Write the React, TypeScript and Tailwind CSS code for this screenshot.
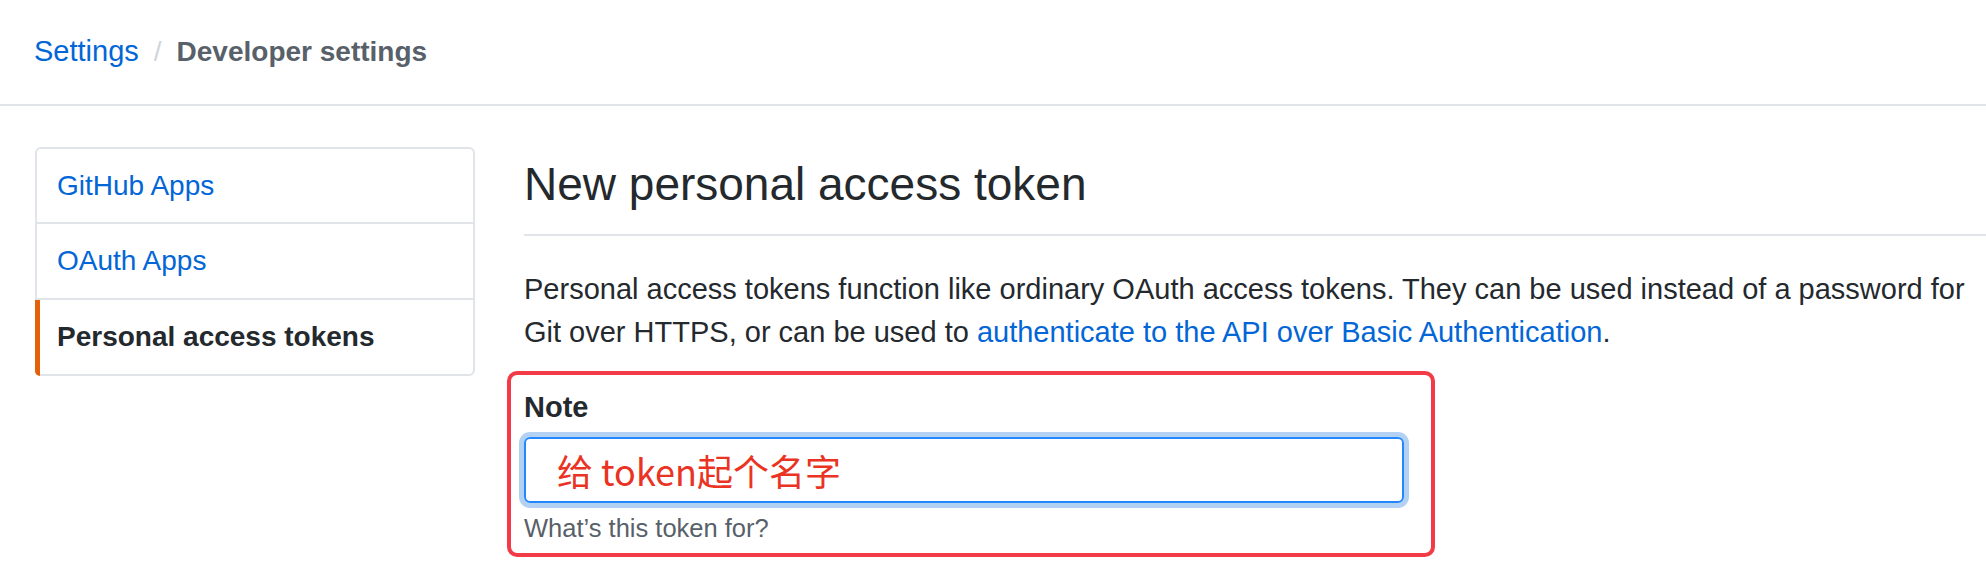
import React from "react";

export default function App() {
  return (
    <div
      className="w-full h-[572px] overflow-hidden bg-white text-[#24292e]"
      style={{ fontFamily: '"Liberation Sans", "Noto Sans CJK SC", sans-serif' }}
    >
      <header className="h-[106px] border-b-2 border-[#e1e4e8] flex items-center pl-[34px] text-[28px]">
        <span className="text-[29px] text-[#0366d6]">Settings</span>
        <span className="mx-[15px] text-[#d1d5da]">/</span>
        <span className="font-semibold text-[#586069]">Developer settings</span>
      </header>

      <div className="flex pl-[35px] pt-[41px]">
        <nav className="w-[440px] shrink-0 border-2 border-[#e1e4e8] rounded-[6px] self-start text-[28px]">
          <div className="h-[75px] border-b-2 border-[#e1e4e8] flex items-center pl-[20px] text-[#0366d6]">
            GitHub Apps
          </div>
          <div className="h-[76px] border-b-2 border-[#e1e4e8] flex items-center pl-[20px] text-[#0366d6]">
            OAuth Apps
          </div>
          <div className="relative h-[74px] flex items-center pl-[20px] font-bold text-[#24292e]">
            <span className="absolute left-[-2px] top-0 bottom-[-2px] w-[5px] bg-[#e36209] rounded-bl-[6px]" />
            Personal access tokens
          </div>
        </nav>

        <main className="flex-1 min-w-0 ml-[49px]">
          <div className="mt-[9px] pb-[22px] border-b-2 border-[#e1e4e8]">
            <h1 className="text-[46px] leading-[56px] font-normal text-[#24292e]">
              New personal access token
            </h1>
          </div>

          <p className="mt-[32px] text-[29px] leading-[43px] text-[#24292e]">
            Personal access tokens function like ordinary OAuth access tokens. They can be used instead of a password for
            Git over HTTPS, or can be used to{" "}
            <span className="text-[#0366d6]">authenticate to the API over Basic Authentication</span>.
          </p>

          <div className="mt-[17px] -ml-[17px] w-[928px] border-[4px] border-[#f23b46] rounded-[10px] pl-[13px] pt-[11px] pb-[9px]">
            <div className="text-[29px] leading-[43px] font-bold text-[#24292e]">Note</div>
            <div className="mt-[8px] w-[880px] h-[66px] border-2 border-[#2188ff] rounded-[6px] shadow-[0_0_0_5px_rgba(3,102,214,0.3)] flex items-center pl-[31px]">
              <span
                className="text-[36px] text-[#ea3323]"
                style={{ fontFamily: '"Noto Sans CJK SC", sans-serif' }}
              >
                给 token起个名字
              </span>
            </div>
            <div className="mt-[9px] text-[25.5px] leading-[32px] text-[#586069]">What’s this token for?</div>
          </div>
        </main>
      </div>
    </div>
  );
}
